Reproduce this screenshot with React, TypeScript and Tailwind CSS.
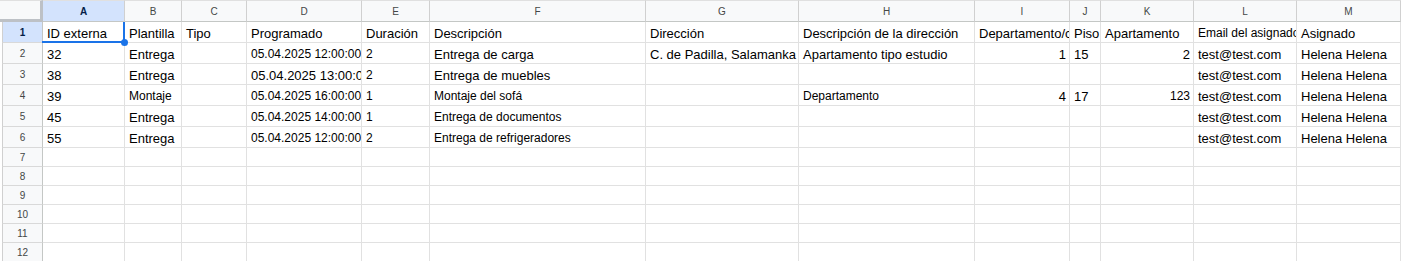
import React from 'react';

type Cell = { t: string; sm?: boolean; right?: boolean };

const COLS = [
  { id: 'A', w: 'w-[82px]' },
  { id: 'B', w: 'w-[57px]' },
  { id: 'C', w: 'w-[65px]' },
  { id: 'D', w: 'w-[115px]' },
  { id: 'E', w: 'w-[68px]' },
  { id: 'F', w: 'w-[216px]' },
  { id: 'G', w: 'w-[153px]' },
  { id: 'H', w: 'w-[176px]' },
  { id: 'I', w: 'w-[95px]' },
  { id: 'J', w: 'w-[31px]' },
  { id: 'K', w: 'w-[93px]' },
  { id: 'L', w: 'w-[103px]' },
  { id: 'M', w: 'w-[104px]' },
];

const c = (t: string, sm = false, right = false): Cell => ({ t, sm, right });
const e = c('');

const ROWS: Cell[][] = [
  [
    c('ID externa'), c('Plantilla'), c('Tipo'), c('Programado'), c('Duración'), c('Descripción'),
    c('Dirección'), c('Descripción de la dirección'), c('Departamento/casa'), c('Piso'),
    c('Apartamento'), c('Email del asignado', true), c('Asignado'),
  ],
  [
    c('32'), c('Entrega'), e, c('05.04.2025 12:00:00', true), c('2', true), c('Entrega de carga'),
    c('C. de Padilla, Salamanka'), c('Apartamento tipo estudio'), c('1', false, true), c('15'),
    c('2', false, true), c('test@test.com'), c('Helena Helena'),
  ],
  [
    c('38'), c('Entrega'), e, c('05.04.2025 13:00:00'), c('2', true), c('Entrega de muebles'),
    e, e, e, e, e, c('test@test.com'), c('Helena Helena'),
  ],
  [
    c('39'), c('Montaje', true), e, c('05.04.2025 16:00:00', true), c('1', true), c('Montaje del sofá', true),
    e, c('Departamento', true), c('4', false, true), c('17'), c('123', true, true),
    c('test@test.com'), c('Helena Helena'),
  ],
  [
    c('45'), c('Entrega'), e, c('05.04.2025 14:00:00', true), c('1', true), c('Entrega de documentos', true),
    e, e, e, e, e, c('test@test.com'), c('Helena Helena'),
  ],
  [
    c('55'), c('Entrega'), e, c('05.04.2025 12:00:00', true), c('2', true), c('Entrega de refrigeradores', true),
    e, e, e, e, e, c('test@test.com'), c('Helena Helena'),
  ],
];

const EMPTY_ROWS = [7, 8, 9, 10, 11, 12];

const Selection: React.FC = () => (
  <>
    <div className="absolute right-[-1px] top-0 bottom-[-1px] w-[2px] bg-[#1a73e8] z-10" />
    <div className="absolute left-[-1px] right-[-1px] bottom-[-1px] h-[2px] bg-[#1a73e8] z-10" />
    <div className="absolute right-[-4px] bottom-[-4px] w-[7px] h-[7px] rounded-full bg-[#1a73e8] z-20" />
  </>
);

const DataCell: React.FC<{ cell: Cell; w: string; selected?: boolean }> = ({ cell, w, selected }) => (
  <div className={`relative ${w} shrink-0 h-full border-r border-b border-[#e1e1e1]`}>
    <div
      className={`h-full flex items-end overflow-hidden whitespace-nowrap pl-[4px] pr-[3px] pb-[1px] leading-[15px] ${
        cell.right ? 'justify-end' : 'justify-start'
      } ${cell.sm ? 'text-[12px]' : 'text-[13px]'}`}
    >
      <span>{cell.t}</span>
    </div>
    {selected && <Selection />}
  </div>
);

const RowHeader: React.FC<{ n: number; selected?: boolean }> = ({ n, selected }) => (
  <div
    className={`ml-[2px] w-[41px] shrink-0 h-full flex items-center justify-center border-l border-r border-b border-l-[#d0d0d0] border-r-[#c4c7c5] border-b-[#d9d9d9] text-[10px] ${
      selected ? 'bg-[#d3e3fd] font-bold text-[#041e49]' : 'bg-[#f8f9fa] text-[#444746]'
    }`}
  >
    {n}
  </div>
);

export default function App() {
  return (
    <div className="w-[1403px] h-[261px] overflow-hidden bg-white text-black font-['Liberation_Sans',Arial,sans-serif]">
      {/* column letters */}
      <div className="flex h-[22px]">
        <div className="w-[43px] shrink-0 h-full bg-[#f8f9fa] border-t border-r-[3px] border-b-[3px] border-t-[#e0e0e0] border-r-[#bdc1c6] border-b-[#bdc1c6]" />
        {COLS.map((col) => (
          <div
            key={col.id}
            className={`${col.w} shrink-0 h-full flex items-center justify-center border-t border-r border-b border-t-[#e0e0e0] border-r-[#d0d0d0] border-b-[#c4c7c5] text-[10px] ${
              col.id === 'A' ? 'bg-[#d3e3fd] font-bold text-[#041e49]' : 'bg-[#f8f9fa] text-[#444746]'
            }`}
          >
            {col.id}
          </div>
        ))}
      </div>

      {ROWS.map((row, ri) => (
        <div key={ri} className="flex h-[21px]">
          <RowHeader n={ri + 1} selected={ri === 0} />
          {row.map((cell, ci) => (
            <DataCell key={ci} cell={cell} w={COLS[ci].w} selected={ri === 0 && ci === 0} />
          ))}
        </div>
      ))}

      {EMPTY_ROWS.map((n) => (
        <div key={n} className="flex h-[19px]">
          <RowHeader n={n} />
          {COLS.map((col) => (
            <DataCell key={col.id} cell={e} w={col.w} />
          ))}
        </div>
      ))}
    </div>
  );
}
